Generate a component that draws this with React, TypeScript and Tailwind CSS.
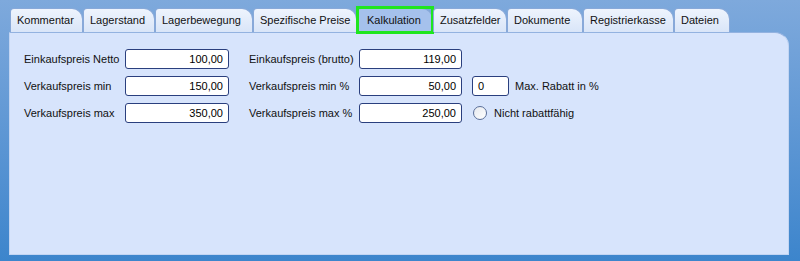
import React from "react";

const tabs: { label: string; w: number; selected?: boolean }[] = [
  { label: "Kommentar", w: 73 },
  { label: "Lagerstand", w: 72 },
  { label: "Lagerbewegung", w: 98 },
  { label: "Spezifische Preise", w: 104 },
  { label: "Kalkulation", w: 76, selected: true },
  { label: "Zusatzfelder", w: 74 },
  { label: "Dokumente", w: 76 },
  { label: "Registrierkasse", w: 91 },
  { label: "Dateien", w: 56 },
];

function Field({ value, w, align = "right" }: { value: string; w: number; align?: "left" | "right" }) {
  return (
    <div
      className={`h-[20px] bg-white border border-[#2a3f7e] rounded-[3px] flex items-center text-[11px] text-black ${
        align === "right" ? "justify-end pr-[5px]" : "justify-start pl-[5px]"
      }`}
      style={{ width: w }}
    >
      {value}
    </div>
  );
}

export default function App() {
  return (
    <div
      className="w-[800px] h-[261px] overflow-hidden bg-linear-to-b from-[#7ea9dc] to-[#3c85cc] flex flex-col"
      style={{ fontFamily: '"Liberation Sans", Arial, sans-serif' }}
    >
      <div className="flex pl-[10px] pt-[8px] h-[32px]">
        {tabs.map((t) => (
          <div
            key={t.label}
            className={`relative h-[24px] flex items-center pl-[6px] text-[11px] text-[#111] border border-b-0 rounded-tl-[4px] rounded-tr-[11px] ${
              t.selected
                ? "bg-[#a5c1ec] border-[#86a7d8] pl-[9px]"
                : "bg-linear-to-b from-[#eef4fd] to-[#d9e5f8] border-[#88a9d9]"
            }`}
            style={{ width: t.w }}
          >
            {t.label}
            {t.selected && (
              <span className="absolute -left-[2px] -top-[3px] -right-[2px] -bottom-[2px] border-[3px] border-[#1fe61f] pointer-events-none" />
            )}
          </div>
        ))}
      </div>
      <div className="ml-[9px] w-[780px] h-[223px] bg-[#d7e4fc] border border-[#c2d5f3] border-t-[#93b2e0] rounded-tr-[14px] pt-[16px] pl-[14px] flex flex-col gap-[7px] text-[11px] text-[#111]">
        <div className="flex items-center h-[20px]">
          <span className="w-[101px]">Einkaufspreis Netto</span>
          <Field value="100,00" w={104} />
          <span className="w-[130px] pl-[20px]">Einkaufspreis (brutto)</span>
          <Field value="119,00" w={103} />
        </div>
        <div className="flex items-center h-[20px]">
          <span className="w-[101px]">Verkaufspreis min</span>
          <Field value="150,00" w={104} />
          <span className="w-[130px] pl-[20px]">Verkaufspreis min %</span>
          <Field value="50,00" w={103} />
          <div className="ml-[10px]">
            <Field value="0" w={37} align="left" />
          </div>
          <span className="ml-[6px]">Max. Rabatt in %</span>
        </div>
        <div className="flex items-center h-[20px]">
          <span className="w-[101px]">Verkaufspreis max</span>
          <Field value="350,00" w={104} />
          <span className="w-[130px] pl-[20px]">Verkaufspreis max %</span>
          <Field value="250,00" w={103} />
          <span className="ml-[11px] w-[14px] h-[14px] rounded-full border border-[#5b6f99] bg-linear-to-br from-[#e6e9ef] to-white" />
          <span className="ml-[7px]">Nicht rabattfähig</span>
        </div>
      </div>
    </div>
  );
}
